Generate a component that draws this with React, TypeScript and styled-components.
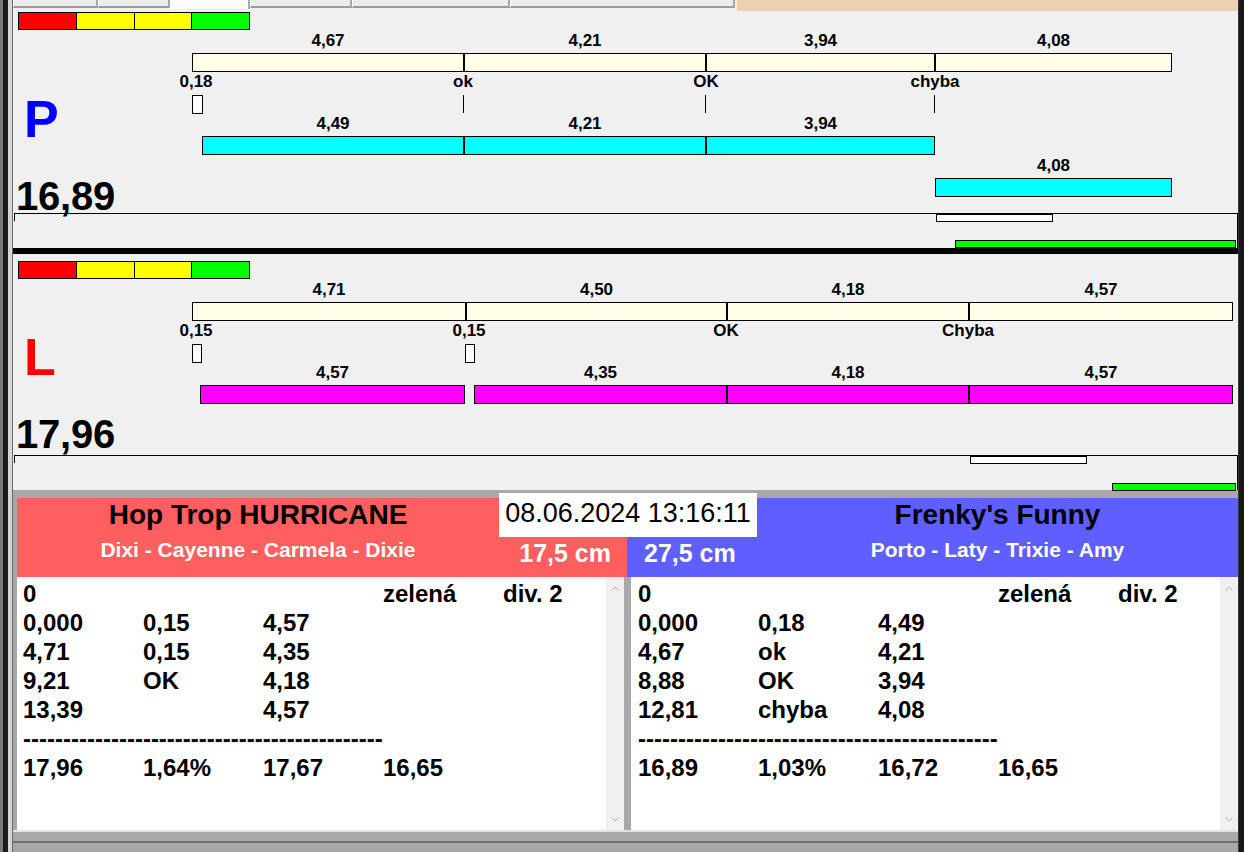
import React from 'react';
import styled, { createGlobalStyle } from 'styled-components';

const FONT = '"Liberation Sans", Arial, Helvetica, sans-serif';

const Global = createGlobalStyle`
  html, body { margin: 0; padding: 0; background: #a8a8a8; }
  body { font-family: ${FONT}; color: #000; }
  * { box-sizing: border-box; }
`;

/* ---------- data ---------- */

type SegBar = { top: number; edges: number[]; labels: string[]; color: string };
type EdgeLabel = { x: number; text: string };
type Marker = { x: number; w: number };
type LaneBar = { x: number; w: number; top: number; h: number; color: string };

type PanelData = {
  id: string;
  letter: string;
  letterColor: string;
  total: string;
  height: number;
  legendTop: number;
  stageTop: number;
  stageHeight: number;
  letterPad: number;
  bars: SegBar[];
  edgeLabelTop: number;
  edgeLabels: EdgeLabel[];
  markerTop: number;
  markers: Marker[];
  ticks: number[];
  laneBars: LaneBar[];
};

const CREAM = '#fffde8';
const CYAN = '#00ffff';
const MAGENTA = '#ff00ff';

const panels: PanelData[] = [
  {
    id: 'P',
    letter: 'P',
    letterColor: '#0000ff',
    total: '16,89',
    height: 237,
    legendTop: 1,
    stageTop: 30,
    stageHeight: 183,
    letterPad: 63,
    bars: [
      { top: 53, edges: [192, 464, 706, 935, 1172], labels: ['4,67', '4,21', '3,94', '4,08'], color: CREAM },
      { top: 136, edges: [202, 464, 706, 935], labels: ['4,49', '4,21', '3,94'], color: CYAN },
      { top: 178, edges: [935, 1172], labels: ['4,08'], color: CYAN },
    ],
    edgeLabelTop: 74,
    edgeLabels: [
      { x: 196, text: '0,18' },
      { x: 463, text: 'ok' },
      { x: 706, text: 'OK' },
      { x: 935, text: 'chyba' },
    ],
    markerTop: 95,
    markers: [{ x: 192, w: 11 }],
    ticks: [463, 705, 934],
    laneBars: [
      { x: 936, w: 117, top: 0, h: 7, color: '#ffffff' },
      { x: 955, w: 281, top: 26, h: 7, color: '#00ff00' },
    ],
  },
  {
    id: 'L',
    letter: 'L',
    letterColor: '#ff0000',
    total: '17,96',
    height: 236,
    legendTop: 7,
    stageTop: 279,
    stageHeight: 176,
    letterPad: 52,
    bars: [
      { top: 302, edges: [192, 466, 727, 969, 1233], labels: ['4,71', '4,50', '4,18', '4,57'], color: CREAM },
      { top: 385, edges: [200, 465], labels: ['4,57'], color: MAGENTA },
      { top: 385, edges: [474, 727, 969, 1233], labels: ['4,35', '4,18', '4,57'], color: MAGENTA },
    ],
    edgeLabelTop: 323,
    edgeLabels: [
      { x: 196, text: '0,15' },
      { x: 469, text: '0,15' },
      { x: 726, text: 'OK' },
      { x: 968, text: 'Chyba' },
    ],
    markerTop: 344,
    markers: [
      { x: 192, w: 10 },
      { x: 465, w: 10 },
    ],
    ticks: [],
    laneBars: [
      { x: 970, w: 117, top: 0, h: 7, color: '#ffffff' },
      { x: 1112, w: 124, top: 27, h: 7, color: '#00ff00' },
    ],
  },
];

type Team = {
  name: string;
  dogs: string;
  distance: string;
  color: string;
  side: 'left' | 'right';
  rows: string[][];
};

const DASHES = '-'.repeat(45);

const teams: Team[] = [
  {
    name: 'Hop Trop HURRICANE',
    dogs: 'Dixi - Cayenne - Carmela - Dixie',
    distance: '17,5 cm',
    color: '#ff5f5f',
    side: 'left',
    rows: [
      ['0', '', '', 'zelená', 'div. 2'],
      ['0,000', '0,15', '4,57'],
      ['4,71', '0,15', '4,35'],
      ['9,21', 'OK', '4,18'],
      ['13,39', '', '4,57'],
      [DASHES],
      ['17,96', '1,64%', '17,67', '16,65'],
    ],
  },
  {
    name: "Frenky's Funny",
    dogs: 'Porto - Laty - Trixie - Amy',
    distance: '27,5 cm',
    color: '#5f5fff',
    side: 'right',
    rows: [
      ['0', '', '', 'zelená', 'div. 2'],
      ['0,000', '0,18', '4,49'],
      ['4,67', 'ok', '4,21'],
      ['8,88', 'OK', '3,94'],
      ['12,81', 'chyba', '4,08'],
      [DASHES],
      ['16,89', '1,03%', '16,72', '16,65'],
    ],
  },
];

/* ---------- frame ---------- */

const Screen = styled.div`
  width: 1244px;
  height: 852px;
  display: flex;
  overflow: hidden;
  background: #a8a8a8;
`;

const LeftFrame = styled.div`
  width: 13px;
  flex: none;
  background: linear-gradient(
    to right,
    #7a7a7a 0 3px,
    #1c1c1c 3px 8px,
    #d6d6d6 8px 12px,
    #6a6a6a 12px 13px
  );
`;

const RightFrame = styled.div`
  width: 6px;
  flex: none;
  background: linear-gradient(to right, #3a3a3a 0 1px, #161616 1px 6px);
`;

const Main = styled.div`
  width: 1225px;
  flex: none;
  display: flex;
  flex-direction: column;
`;

/* ---------- tab strip ---------- */

const TabStrip = styled.div`
  height: 11px;
  flex: none;
  display: flex;
  background: #f0f0f0;
`;

const Tab = styled.div<{ $w: number; $sel?: boolean }>`
  width: ${(p) => p.$w}px;
  height: ${(p) => (p.$sel ? 9 : 8)}px;
  flex: none;
  background: ${(p) => (p.$sel ? '#fbfbfb' : '#ececec')};
  border-left: 1px solid #ffffff;
  border-right: 2px solid #a8a8a8;
  border-bottom: ${(p) => (p.$sel ? 'none' : '2px solid #9c9c9c')};
`;

const Peach = styled.div`
  flex: 1;
  height: 11px;
  background: #efcfb2;
  border-left: 2px solid #f8eee4;
`;

/* ---------- panels ---------- */

const Panel = styled.section<{ $h: number }>`
  height: ${(p) => p.$h}px;
  flex: none;
  display: flex;
  flex-direction: column;
  background: #f0f0f0;
`;

const Legend = styled.div<{ $mt: number }>`
  margin: ${(p) => p.$mt}px 0 0 5px;
  width: 232px;
  height: 18px;
  flex: none;
  display: grid;
  grid-template-columns: repeat(4, 1fr);
  gap: 1px;
  padding: 1px;
  background: #000;
`;

const LegendCell = styled.div<{ $c: string }>`
  background: ${(p) => p.$c};
`;

const Stage = styled.div<{ $h: number }>`
  position: relative;
  height: ${(p) => p.$h}px;
  flex: none;
`;

const Side = styled.div<{ $pt: number }>`
  padding-top: ${(p) => p.$pt}px;
  display: flex;
  flex-direction: column;
  gap: 31px;
  width: 160px;
`;

const BigLetter = styled.div<{ $c: string }>`
  margin-left: 11px;
  font: bold 52px/52px ${FONT};
  color: ${(p) => p.$c};
`;

const BigTotal = styled.div`
  margin-left: 3px;
  font: bold 40px/40px ${FONT};
  color: #000;
  letter-spacing: -0.2px;
`;

const Segment = styled.div<{ $c: string }>`
  position: absolute;
  height: 19px;
  border: 1px solid #000;
  background: ${(p) => p.$c};
`;

const ChartLabel = styled.div`
  position: absolute;
  transform: translateX(-50%);
  font: bold 17px/16px ${FONT};
  white-space: nowrap;
  color: #000;
`;

const MarkerBox = styled.div`
  position: absolute;
  height: 19px;
  border: 1px solid #000;
  background: #fff;
`;

const Tick = styled.div`
  position: absolute;
  width: 1px;
  height: 18px;
  background: #000;
`;

const Lane = styled.div`
  position: relative;
  height: 35px;
  margin-left: 1px;
  width: 1224px;
  flex: none;
  border-top: 1px solid #000;
  border-right: 1px solid #000;
  &::before {
    content: '';
    position: absolute;
    left: 0;
    top: 0;
    width: 1px;
    height: 7px;
    background: #000;
  }
`;

const LaneBarBox = styled.div<{ $c: string }>`
  position: absolute;
  border: 1px solid #000;
  background: ${(p) => p.$c};
`;

const BlackRule = styled.div`
  height: 6px;
  flex: none;
  background: #000;
`;

const GrayBand = styled.div`
  height: 8px;
  flex: none;
  background: #a8a8a8;
`;

/* ---------- bottom ---------- */

const Bottom = styled.div`
  position: relative;
  height: 332px;
  flex: none;
  padding-left: 4px;
  display: grid;
  grid-template-columns: 610px 611px;
  background: #a8a8a8;
`;

const DateBox = styled.div`
  position: absolute;
  left: 486px;
  top: -5px;
  width: 258px;
  height: 44px;
  background: #fff;
  display: flex;
  align-items: center;
  justify-content: center;
  padding-bottom: 3px;
  font: 27px/27px ${FONT};
  color: #000;
  white-space: nowrap;
`;

const TeamColumn = styled.div`
  display: flex;
  flex-direction: column;
`;

const Header = styled.div<{ $c: string; $side: 'left' | 'right' }>`
  height: 79px;
  flex: none;
  background: ${(p) => p.$c};
  display: grid;
  grid-template-columns: ${(p) => (p.$side === 'left' ? '482px 128px' : '130px 481px')};
`;

const TitleBlock = styled.div`
  padding-top: 3px;
  display: flex;
  flex-direction: column;
  align-items: center;
  white-space: nowrap;
`;

const TeamName = styled.div`
  font: bold 28px/28px ${FONT};
  color: #000;
`;

const Dogs = styled.div`
  margin-top: 10px;
  font: bold 21px/21px ${FONT};
  color: #fff;
`;

const Distance = styled.div<{ $side: 'left' | 'right' }>`
  padding-top: 43px;
  font: bold 25px/25px ${FONT};
  color: #fff;
  white-space: nowrap;
  text-align: ${(p) => (p.$side === 'left' ? 'right' : 'left')};
  padding-right: ${(p) => (p.$side === 'left' ? '16px' : '0')};
  padding-left: ${(p) => (p.$side === 'left' ? '0' : '17px')};
`;

const ListArea = styled.div<{ $side: 'left' | 'right' }>`
  height: 253px;
  flex: none;
  display: flex;
  background: #fff;
  margin-right: ${(p) => (p.$side === 'left' ? '3px' : '0')};
  margin-left: ${(p) => (p.$side === 'left' ? '0' : '4px')};
`;

const ListBody = styled.div<{ $pl: number }>`
  flex: 1;
  padding: 2px 0 0 ${(p) => p.$pl}px;
  overflow: hidden;
`;

const Row = styled.div`
  display: grid;
  grid-template-columns: repeat(5, 120px);
  height: 29px;
  font: bold 24px/29px ${FONT};
  color: #000;
  white-space: nowrap;
`;

const Cell = styled.div<{ $span?: boolean }>`
  grid-column: ${(p) => (p.$span ? '1 / -1' : 'auto')};
  overflow: visible;
`;

const Scrollbar = styled.div`
  width: 18px;
  flex: none;
  background: #f0f0f0;
  display: flex;
  flex-direction: column;
  justify-content: space-between;
  align-items: center;
  padding: 9px 0 8px;
`;

const BottomStrip = styled.div`
  height: 22px;
  flex: none;
  background: #a8a8a8;
  border-top: 2px solid #e2e2e2;
  padding-top: 9px;
`;

const StripLine = styled.div`
  height: 2px;
  background: #6e6e6e;
`;

/* ---------- components ---------- */

const Chevron: React.FC<{ up?: boolean }> = ({ up }) => (
  <svg width="8" height="5" viewBox="0 0 8 5">
    <polyline
      points={up ? '0.5,4.5 4,1 7.5,4.5' : '0.5,0.5 4,4 7.5,0.5'}
      fill="none"
      stroke="#b4b4b4"
      strokeWidth="1"
    />
  </svg>
);

const STAGE_LEFT = 13;
const LANE_LEFT = 14;

const TrackPanel: React.FC<{ d: PanelData }> = ({ d }) => {
  const y = (v: number) => v - d.stageTop;
  const x = (v: number) => v - STAGE_LEFT;
  return (
    <Panel $h={d.height}>
      <Legend $mt={d.legendTop}>
        <LegendCell $c="#ff0000" />
        <LegendCell $c="#ffff00" />
        <LegendCell $c="#ffff00" />
        <LegendCell $c="#00ff00" />
      </Legend>
      <Stage $h={d.stageHeight}>
        <Side $pt={d.letterPad}>
          <BigLetter $c={d.letterColor}>{d.letter}</BigLetter>
          <BigTotal>{d.total}</BigTotal>
        </Side>
        {d.bars.map((b, bi) =>
          b.labels.map((lab, i) => {
            const a = b.edges[i];
            const z = b.edges[i + 1];
            return (
              <React.Fragment key={`${bi}-${i}`}>
                <Segment $c={b.color} style={{ left: x(a), top: y(b.top), width: z - a }} />
                <ChartLabel style={{ left: x((a + z) / 2), top: y(b.top - 20) }}>{lab}</ChartLabel>
              </React.Fragment>
            );
          })
        )}
        {d.edgeLabels.map((l, i) => (
          <ChartLabel key={`e${i}`} style={{ left: x(l.x), top: y(d.edgeLabelTop) }}>
            {l.text}
          </ChartLabel>
        ))}
        {d.markers.map((m, i) => (
          <MarkerBox key={`m${i}`} style={{ left: x(m.x), top: y(d.markerTop), width: m.w }} />
        ))}
        {d.ticks.map((t, i) => (
          <Tick key={`t${i}`} style={{ left: x(t), top: y(d.markerTop) }} />
        ))}
      </Stage>
      <Lane>
        {d.laneBars.map((b, i) => (
          <LaneBarBox
            key={i}
            $c={b.color}
            style={{ left: b.x - LANE_LEFT, top: b.top, width: b.w, height: b.h + 1 }}
          />
        ))}
      </Lane>
    </Panel>
  );
};

const TeamPanel: React.FC<{ t: Team }> = ({ t }) => {
  const title = (
    <TitleBlock>
      <TeamName>{t.name}</TeamName>
      <Dogs>{t.dogs}</Dogs>
    </TitleBlock>
  );
  const dist = <Distance $side={t.side}>{t.distance}</Distance>;
  return (
    <TeamColumn>
      <Header $c={t.color} $side={t.side}>
        {t.side === 'left' ? (
          <>
            {title}
            {dist}
          </>
        ) : (
          <>
            {dist}
            {title}
          </>
        )}
      </Header>
      <ListArea $side={t.side}>
        <ListBody $pl={t.side === 'left' ? 6 : 7}>
          {t.rows.map((r, ri) => (
            <Row key={ri}>
              {r.length === 1 ? (
                <Cell $span>{r[0]}</Cell>
              ) : (
                r.map((c, ci) => <Cell key={ci}>{c}</Cell>)
              )}
            </Row>
          ))}
        </ListBody>
        <Scrollbar>
          <Chevron up />
          <Chevron />
        </Scrollbar>
      </ListArea>
    </TeamColumn>
  );
};

export default function App() {
  return (
    <>
      <Global />
      <Screen>
        <LeftFrame />
        <Main>
          <TabStrip>
            <Tab $w={85} />
            <Tab $w={72} />
            <Tab $w={80} $sel />
            <Tab $w={102} />
            <Tab $w={158} />
            <Tab $w={225} />
            <Peach />
          </TabStrip>
          <TrackPanel d={panels[0]} />
          <BlackRule />
          <TrackPanel d={panels[1]} />
          <GrayBand />
          <Bottom>
            <TeamPanel t={teams[0]} />
            <TeamPanel t={teams[1]} />
            <DateBox>08.06.2024 13:16:11</DateBox>
          </Bottom>
          <BottomStrip>
            <StripLine />
          </BottomStrip>
        </Main>
        <RightFrame />
      </Screen>
    </>
  );
}
